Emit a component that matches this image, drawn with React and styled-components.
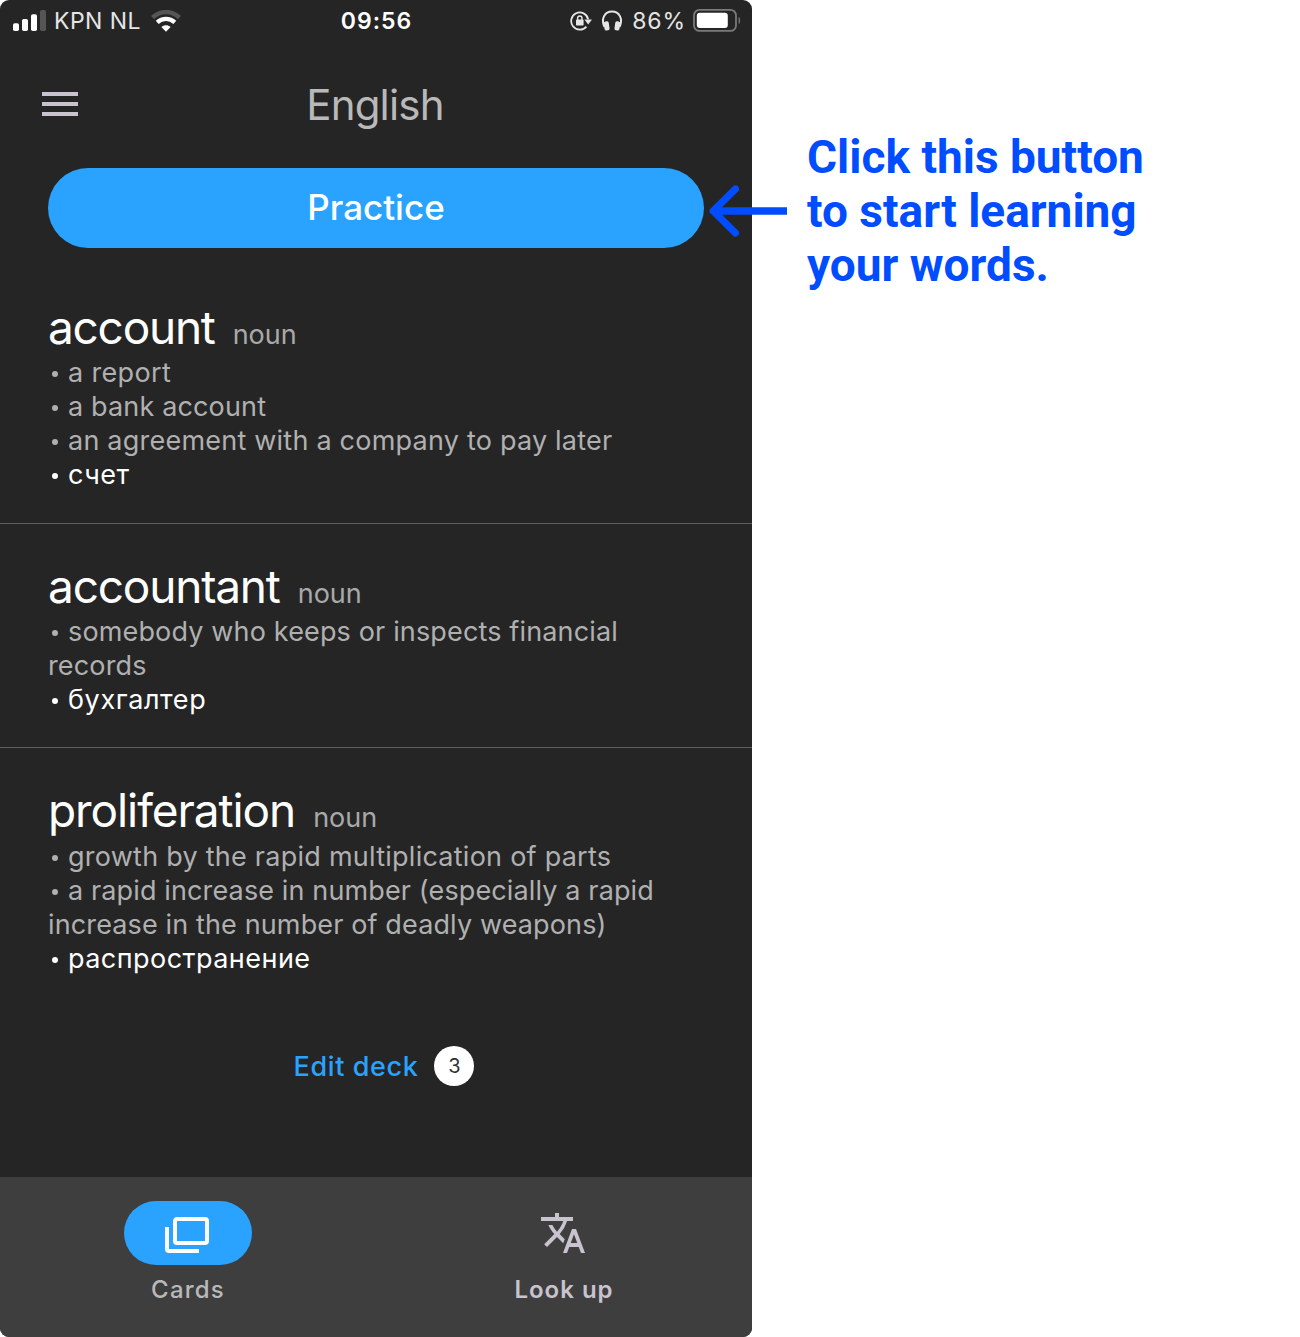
import React from "react";
import styled, { createGlobalStyle } from "styled-components";

const GlobalStyle = createGlobalStyle`
  *, *::before, *::after { box-sizing: border-box; }
  body { margin: 0; background: #fff; font-family: Inter, "Liberation Sans", sans-serif; }
  button { font: inherit; border: 0; background: none; padding: 0; cursor: pointer; }
`;

const Page = styled.main`
  display: flex;
  align-items: flex-start;
  width: 1300px;
  height: 1337px;
  overflow: hidden;
`;

const Phone = styled.section`
  display: flex;
  flex-direction: column;
  flex: none;
  width: 752px;
  height: 1337px;
  border-radius: 9px;
  overflow: hidden;
  background: #252525;
`;

const StatusBar = styled.div`
  display: grid;
  grid-template-columns: 1fr auto 1fr;
  align-items: center;
  height: 40px;
  padding: 0 11px 0 13px;
  color: #fff;
  font-size: 23px;
  line-height: 40px;
`;

const StatusGroup = styled.div`
  display: flex;
  align-items: center;
  justify-content: ${(p) => (p.$end ? "flex-end" : "flex-start")};
  height: 40px;
  color: #e6e6e6;
  white-space: nowrap;
`;

const Carrier = styled.span`
  padding-top: 1px;
  margin-left: 8px;
  margin-right: 10px;
  letter-spacing: 0.45px;
`;

const Percent = styled.span`
  padding-top: 1px;
  margin-left: 10px;
  margin-right: 7px;
  letter-spacing: 0.9px;
`;

const Clock = styled.time`
  padding: 1px 1px 0 0;
  font-weight: 600;
  letter-spacing: 1px;
`;

const Header = styled.header`
  display: grid;
  grid-template-columns: 60px 1fr 60px;
  align-items: center;
  height: 128px;
  padding: 0 32px 0 30px;
`;

const MenuButton = styled.button`
  display: flex;
  flex-direction: column;
  gap: 6px;
  width: 36.4px;
  margin-left: 12px;
`;

const MenuBar = styled.span`
  height: 4px;
  background: #c9c3cf;
`;

const Title = styled.h1`
  margin: 2px 0 0;
  color: #b9b9b9;
  font-size: 42px;
  font-weight: 400;
  line-height: 50px;
  letter-spacing: -0.8px;
  text-align: center;
`;

const PracticeButton = styled.button`
  flex: none;
  height: 80px;
  margin: 0 48px 16.8px;
  padding-bottom: 2px;
  border-radius: 40px;
  background: #29a3ff;
  color: #fff;
  && { font-size: 35px; font-weight: 500; }
  letter-spacing: 0;
`;

const Deck = styled.div`
  display: flex;
  flex-direction: column;
`;

const Card = styled.article`
  padding: 34px 48px 31.2px;
  border-bottom: 1px solid ${(p) => (p.$last ? "transparent" : "#5f5f5f")};
`;

const Heading = styled.div`
  display: flex;
  align-items: baseline;
  gap: 18px;
  height: 57.6px;
`;

const Word = styled.h2`
  margin: 0;
  color: #fff;
  font-size: 46px;
  font-weight: 400;
  line-height: 56px;
  letter-spacing: ${(p) => p.$tracking}px;
`;

const PartOfSpeech = styled.span`
  color: #a9a9a9;
  font-size: 27px;
`;

const Line = styled.p`
  margin: 0;
  color: ${(p) => (p.$translation ? "#fff" : "#b0b0b0")};
  font-size: 27px;
  line-height: ${(p) => (p.$translation ? 33 : 34)}px;
  letter-spacing: ${(p) => p.$tracking ?? 0}px;
`;

const Bullet = styled.span`
  display: inline-block;
  width: 20px;
  letter-spacing: 0;
  &::before {
    content: "";
    display: inline-block;
    width: 6px;
    height: 6px;
    margin-left: 4px;
    border-radius: 50%;
    background: currentColor;
    vertical-align: 5px;
  }
`;

const EditRow = styled.div`
  display: flex;
  align-items: center;
  justify-content: center;
  gap: 16px;
  height: 40px;
  margin-top: 39.3px;
  padding-left: 16px;
`;

const EditLink = styled.button`
  color: #29a3ff;
  && { font-size: 27px; font-weight: 500; }
  letter-spacing: 0.6px;
`;

const Count = styled.span`
  display: grid;
  place-items: center;
  width: 40px;
  height: 40px;
  border-radius: 50%;
  background: #fff;
  color: #333;
  font-size: 20px;
`;

const TabBar = styled.nav`
  display: flex;
  flex: none;
  height: 160px;
  margin-top: auto;
  background: #3e3e3e;
`;

const Tab = styled.button`
  display: flex;
  flex: 1;
  flex-direction: column;
  align-items: center;
  gap: 10px;
  padding-top: 24px;
`;

const TabPill = styled.span`
  display: flex;
  align-items: center;
  justify-content: center;
  width: 128.5px;
  height: 64px;
  padding-right: 1.5px;
  border-radius: 32px;
  background: ${(p) => (p.$active ? "#29a3ff" : "transparent")};
`;

const TabLabel = styled.span`
  color: ${(p) => (p.$active ? "#b9b9b9" : "#c9c3cf")};
  font-size: 24px;
  font-weight: ${(p) => (p.$active ? 500 : 600)};
  line-height: 30px;
  letter-spacing: ${(p) => (p.$active ? 1.2 : 1)}px;
`;

const Annotation = styled.aside`
  display: flex;
  position: relative;
  align-items: flex-start;
  gap: 20px;
  margin: 130px 0 0 -44px;
  color: #004dff;
`;

const AnnotationArrow = styled.svg`
  flex: none;
  margin-top: 53px;
`;

const AnnotationText = styled.p`
  width: 350px;
  margin: 0;
  font-family: Roboto, "Liberation Sans", sans-serif;
  font-size: 46px;
  font-weight: 700;
  line-height: 54px;
  white-space: nowrap;
`;

function SignalIcon() {
  return (
    <svg width="33" height="22" viewBox="0 0 33 22" fill="#fff">
      <rect x="0" y="13.2" width="6" height="7.8" rx="1.8" />
      <rect x="9" y="9" width="6" height="12" rx="1.8" />
      <rect x="18" y="4.3" width="6" height="16.7" rx="1.8" />
      <rect x="27" y="0" width="6" height="21" rx="1.8" fill="#555" />
    </svg>
  );
}

function WifiIcon() {
  return (
    <svg width="30" height="22" viewBox="0 0 30 22" fill="none">
      <path d="M1.6 7.6C9.2.2 20.8.2 28.4 7.6" stroke="#555" strokeWidth="4.4" />
      <path d="M6.2 12.4C11.2 7.7 18.8 7.7 23.8 12.4" stroke="#fff" strokeWidth="4.2" />
      <path d="M15 21.8L10.4 17C13 14.6 17 14.6 19.6 17Z" fill="#fff" />
    </svg>
  );
}

const RotationLock = styled.svg`
  margin-right: 10px;
`;

function RotationLockIcon() {
  return (
    <RotationLock width="22" height="20" viewBox="0 0 22 20" fill="none">
      <path d="M16.4 15.6A8.6 8.6 0 1 1 18.2 8.2" stroke="#e6e6e6" strokeWidth="1.8" />
      <path d="M14.4 8.4H22L18.2 13.4Z" fill="#e6e6e6" />
      <rect x="6" y="8.6" width="7.6" height="6" rx="0.8" fill="#e6e6e6" />
      <path d="M7.6 9V7.2a2.2 2.2 0 0 1 4.4 0V9" stroke="#e6e6e6" strokeWidth="1.4" />
    </RotationLock>
  );
}

function HeadphonesIcon() {
  return (
    <svg width="20" height="21" viewBox="0 0 20 21" fill="none">
      <path d="M2.6 17C-1.6 8.5 3 1.6 10 1.6S21.6 8.5 17.4 17" stroke="#e6e6e6" strokeWidth="2" />
      <rect x="2.2" y="11.4" width="5" height="9" rx="1.8" fill="#e6e6e6" transform="rotate(-8 4.7 16)" />
      <rect x="12.8" y="11.4" width="5" height="9" rx="1.8" fill="#e6e6e6" transform="rotate(8 15.3 16)" />
    </svg>
  );
}

function BatteryIcon() {
  return (
    <svg width="48" height="24" viewBox="0 0 48 24" fill="none">
      <rect x="1" y="0.9" width="42" height="21" rx="5.5" stroke="#7a7a7a" strokeWidth="1.8" />
      <rect x="3.8" y="3.8" width="31" height="15.2" rx="3" fill="#fff" />
      <path d="M45.6 7.8c2 1 2 6.4 0 7.4z" fill="#7a7a7a" />
    </svg>
  );
}

function CardsIcon() {
  return (
    <svg width="48" height="48" viewBox="0 0 24 24" fill="#fff">
      <path d="M21 16V6H7v10h14m0-12a2 2 0 0 1 2 2v10a2 2 0 0 1-2 2H7a2 2 0 0 1-2-2V6c0-1.11.89-2 2-2h14M3 20h15v2H3a2 2 0 0 1-2-2V9h2v11z" />
    </svg>
  );
}

function TranslateIcon() {
  return (
    <svg width="48" height="48" viewBox="0 0 24 24" fill="#c9c3cf">
      <path d="m12.87 15.07-2.54-2.51.03-.03A17.52 17.52 0 0 0 14.07 6H17V4h-7V2H8v2H1v1.99h11.17C11.5 7.92 10.44 9.75 9 11.35 8.07 10.32 7.3 9.19 6.69 8h-2c.73 1.63 1.73 3.17 2.98 4.56l-5.09 5.02L4 19l5-5 3.11 3.11.76-2.04zM18.5 10h-2L12 22h2l1.12-3h4.75L21 22h2l-4.5-12zm-2.62 7 1.62-4.33L19.12 17h-3.24z" />
    </svg>
  );
}

const cards = [
  {
    word: "account",
    tracking: -1.25,
    meanings: [
      { text: "a report", tracking: 0.35 },
      { text: "a bank account", tracking: 0.15 },
      { text: "an agreement with a company to pay later", tracking: 0.22 },
    ],
    translation: { text: "счет", tracking: 0.45 },
  },
  {
    word: "accountant",
    tracking: -1.2,
    meanings: [{ text: "somebody who keeps or inspects financial records", tracking: 0.15 }],
    translation: { text: "бухгалтер", tracking: 0.62 },
  },
  {
    word: "proliferation",
    tracking: -1.08,
    meanings: [
      { text: "growth by the rapid multiplication of parts", tracking: 0.25 },
      {
        text: "a rapid increase in number (especially a rapid increase in the number of deadly weapons)",
        tracking: 0.13,
      },
    ],
    translation: { text: "распространение", tracking: 0.45 },
  },
];

export default function App() {
  return (
    <Page>
      <GlobalStyle />
      <Phone>
        <StatusBar>
          <StatusGroup>
            <SignalIcon />
            <Carrier>KPN NL</Carrier>
            <WifiIcon />
          </StatusGroup>
          <Clock>09:56</Clock>
          <StatusGroup $end>
            <RotationLockIcon />
            <HeadphonesIcon />
            <Percent>86%</Percent>
            <BatteryIcon />
          </StatusGroup>
        </StatusBar>
        <Header>
          <MenuButton aria-label="Menu">
            <MenuBar />
            <MenuBar />
            <MenuBar />
          </MenuButton>
          <Title>English</Title>
        </Header>
        <PracticeButton>Practice</PracticeButton>
        <Deck>
          {cards.map((card, i) => (
            <Card key={card.word} $last={i === cards.length - 1}>
              <Heading>
                <Word $tracking={card.tracking}>{card.word}</Word>
                <PartOfSpeech>noun</PartOfSpeech>
              </Heading>
              {card.meanings.map((m) => (
                <Line key={m.text} $tracking={m.tracking}>
                  <Bullet />
                  {m.text}
                </Line>
              ))}
              <Line $translation $tracking={card.translation.tracking}>
                <Bullet />
                {card.translation.text}
              </Line>
            </Card>
          ))}
        </Deck>
        <EditRow>
          <EditLink>Edit deck</EditLink>
          <Count>3</Count>
        </EditRow>
        <TabBar>
          <Tab>
            <TabPill $active>
              <CardsIcon />
            </TabPill>
            <TabLabel $active>Cards</TabLabel>
          </Tab>
          <Tab>
            <TabPill>
              <TranslateIcon />
            </TabPill>
            <TabLabel>Look up</TabLabel>
          </Tab>
        </TabBar>
      </Phone>
      <Annotation>
        <AnnotationArrow width="79" height="56" viewBox="0 0 79 56" fill="none" stroke="currentColor" strokeWidth="7.3">
          <path d="M27.4 6L5.2 28L27.4 50" strokeLinecap="round" strokeLinejoin="round" />
          <path d="M5.2 28H79" />
        </AnnotationArrow>
        <AnnotationText>
          Click this button
          <br />
          to start learning
          <br />
          your words.
        </AnnotationText>
      </Annotation>
    </Page>
  );
}
